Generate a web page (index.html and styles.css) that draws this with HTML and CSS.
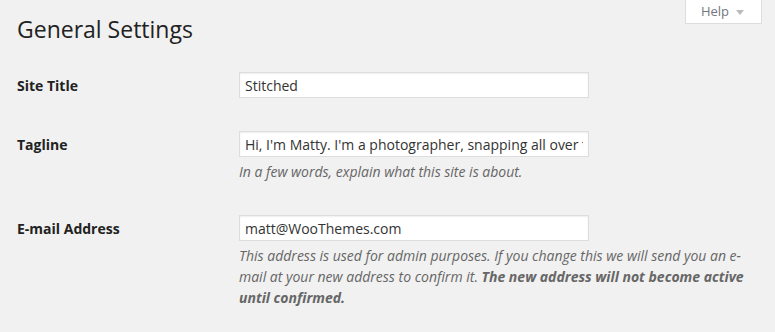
FILE: index.html
```html
<!DOCTYPE html>
<html lang="en">
<head>
  <meta charset="UTF-8">
  <meta name="viewport" content="width=device-width, initial-scale=1.0">
  <title>General Settings</title>
  <link rel="stylesheet" href="styles.css">
</head>
<body>
  <header class="top">
    <h1>General Settings</h1>
    <a class="help-tab" href="#">Help <span class="arrow"></span></a>
  </header>

  <form class="settings">
    <div class="row">
      <label class="label" for="blogname">Site Title</label>
      <div class="field">
        <input type="text" id="blogname" name="blogname" value="Stitched">
      </div>
    </div>

    <div class="row">
      <label class="label" for="blogdescription">Tagline</label>
      <div class="field">
        <input type="text" id="blogdescription" name="blogdescription" value="Hi, I'm Matty. I'm a photographer, snapping all over the world.">
        <p class="description">In a few words, explain what this site is about.</p>
      </div>
    </div>

    <div class="row">
      <label class="label" for="admin_email">E-mail Address</label>
      <div class="field">
        <input type="email" id="admin_email" name="admin_email" value="matt@WooThemes.com">
        <p class="description">This address is used for admin purposes. If you change this we will send you an e-mail at your new address to confirm it. <strong>The new address will not become active until confirmed.</strong></p>
      </div>
    </div>
  </form>
</body>
</html>
```

FILE: styles.css
```css
body { margin: 0; background-color: #f1f1f1; color: #222; font-family: "Open Sans", "Liberation Sans", sans-serif; font-size: 14px; }

.top { display: flex; justify-content: space-between; align-items: flex-start; padding: 0 13px 0 17px; }
.top h1 { margin: 14px 0 0; font-size: 23px; line-height: 30px; font-weight: 400; color: #222; }

.help-tab { display: flex; align-items: center; height: 24px; box-sizing: border-box; padding: 0 17px 0 15px; background: #fff; border: 1px solid #ddd; border-top: none; font-size: 13px; line-height: 23px; color: #72777c; text-decoration: none; }
.help-tab .arrow { width: 0; height: 0; margin-left: 7px; margin-top: 1px; border-top: 5px solid #bbb; border-left: 4px solid transparent; border-right: 4px solid transparent; }

.settings { margin-top: 12px; padding: 0 18px 0 17px; }
.row { display: grid; grid-template-columns: 222px 1fr; padding: 16px 0 17px; }
.label { padding-top: 5px; font-weight: 700; line-height: 18px; color: #222; }

.field input { display: block; width: 350px; height: 26px; box-sizing: border-box; margin: 0; padding: 0 5px; border: 1px solid #ddd; box-shadow: inset 0 1px 2px rgba(0, 0, 0, 0.07); background: #fff; font-family: inherit; font-size: 14px; color: #333; }
.description { margin: 4px 0 0; font-size: 14px; font-style: italic; line-height: 21px; color: #666; }
.description strong { font-weight: 700; }
```
